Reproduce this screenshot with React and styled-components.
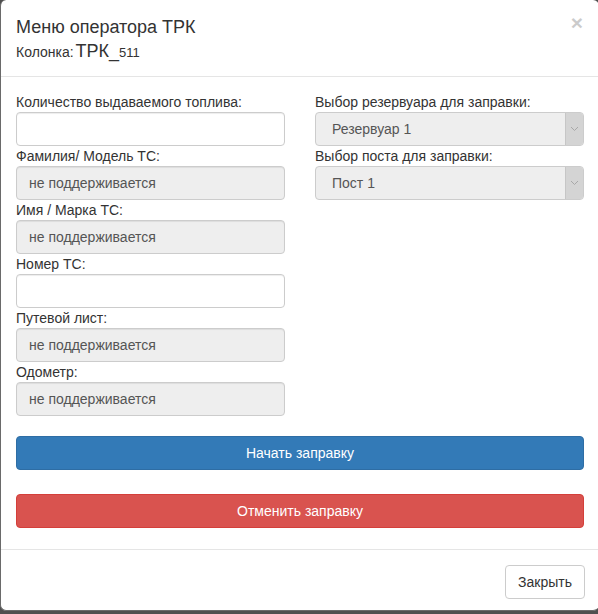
import styled, { createGlobalStyle } from "styled-components";

const Global = createGlobalStyle`
  html, body {
    margin: 0;
    padding: 0;
    background: #4f4f4f;
    font-family: "Liberation Sans", Arial, sans-serif;
    font-size: 14px;
    color: #333;
  }
  * { box-sizing: border-box; }
`;

const Modal = styled.div`
  width: 599px;
  background: #fff;
  border-radius: 6px;
  border-left: 1px solid #6a6a6a;
  border-bottom: 1px solid #6a6a6a;
`;

const Header = styled.div`
  position: relative;
  padding: 15px 15px 13px;
  border-bottom: 1px solid #e5e5e5;
`;

const Title = styled.h4`
  margin: 0;
  font-size: 18px;
  font-weight: 400;
  line-height: 1.42857;
`;

const Sub = styled.div`
  font-size: 14px;
  line-height: 20px;
`;

const Big = styled.span`
  margin-left: 2px;
  font-size: 18px;
`;

const Small = styled.span`
  font-size: 13px;
`;

const Close = styled.button`
  position: absolute;
  top: 12px;
  right: 16px;
  border: none;
  background: none;
  padding: 0;
  font-family: "Liberation Sans", Arial, sans-serif;
  font-size: 21px;
  font-weight: 700;
  line-height: 1;
  color: #000;
  opacity: 0.2;
`;

const Body = styled.div`
  padding: 15px 15px 21px;
`;

const Columns = styled.div`
  display: grid;
  grid-template-columns: 269px 269px;
  column-gap: 30px;
  align-items: start;
`;

const Col = styled.div`
  display: flex;
  flex-direction: column;
`;

const Label = styled.label`
  display: block;
  line-height: 20px;
  height: 20px;
`;

const Input = styled.input`
  display: block;
  width: 100%;
  height: 34px;
  padding: 6px 12px;
  font-family: "Liberation Sans", Arial, sans-serif;
  font-size: 14px;
  color: #555;
  background: ${(p) => (p.disabled ? "#eee" : "#fff")};
  border: 1px solid #ccc;
  border-radius: 4px;
  box-shadow: inset 0 1px 1px rgba(0, 0, 0, 0.075);
  outline: none;
  &::placeholder { color: #555; opacity: 1; }
`;

const Select = styled.div`
  display: flex;
  height: 34px;
  border: 1px solid #ccc;
  border-radius: 4px;
  background: #eee;
  color: #555;
  overflow: hidden;
`;

const SelectText = styled.div`
  flex: 1;
  padding: 0 16px;
  line-height: 32px;
`;

const Arrow = styled.div`
  width: 18px;
  background: #d4d4d4;
  border-left: 1px solid #c6c6c6;
  display: flex;
  align-items: center;
  justify-content: center;
`;

const Actions = styled.div`
  display: flex;
  flex-direction: column;
  gap: 24px;
  margin-top: 20px;
`;

const Btn = styled.button`
  display: block;
  width: ${(p) => (p.$block ? "100%" : "auto")};
  height: 34px;
  padding: 6px 12px;
  font-family: "Liberation Sans", Arial, sans-serif;
  font-size: 14px;
  line-height: 20px;
  border-radius: 4px;
  border: 1px solid ${(p) => p.$border};
  background: ${(p) => p.$bg};
  color: ${(p) => p.$color};
`;

const Footer = styled.div`
  display: flex;
  justify-content: flex-end;
  padding: 15px 14px 11px 15px;
  border-top: 1px solid #e5e5e5;
`;

function Chevron() {
  return (
    <svg width="9" height="6" viewBox="0 0 9 6">
      <path d="M1 1 L4.5 4.5 L8 1" fill="none" stroke="#a8a8a8" strokeWidth="1" />
    </svg>
  );
}

const leftFields = [
  { label: "Количество выдаваемого топлива:", disabled: false },
  { label: "Фамилия/ Модель ТС:", disabled: true },
  { label: "Имя / Марка ТС:", disabled: true },
  { label: "Номер ТС:", disabled: false },
  { label: "Путевой лист:", disabled: true },
  { label: "Одометр:", disabled: true },
];

const rightFields = [
  { label: "Выбор резервуара для заправки:", value: "Резервуар 1" },
  { label: "Выбор поста для заправки:", value: "Пост 1" },
];

export default function App() {
  return (
    <>
      <Global />
      <Modal>
        <Header>
          <Title>Меню оператора ТРК</Title>
          <Sub>
            Колонка:<Big>ТРК_</Big>
            <Small>511</Small>
          </Sub>
          <Close>×</Close>
        </Header>
        <Body>
          <Columns>
            <Col>
              {leftFields.map((f) => (
                <div key={f.label}>
                  <Label>{f.label}</Label>
                  {f.disabled ? (
                    <Input disabled placeholder="не поддерживается" />
                  ) : (
                    <Input />
                  )}
                </div>
              ))}
            </Col>
            <Col>
              {rightFields.map((f) => (
                <div key={f.label}>
                  <Label>{f.label}</Label>
                  <Select>
                    <SelectText>{f.value}</SelectText>
                    <Arrow>
                      <Chevron />
                    </Arrow>
                  </Select>
                </div>
              ))}
            </Col>
          </Columns>
          <Actions>
            <Btn $block $bg="#337ab7" $border="#2e6da4" $color="#fff">
              Начать заправку
            </Btn>
            <Btn $block $bg="#d9534f" $border="#d43f3a" $color="#fff">
              Отменить заправку
            </Btn>
          </Actions>
        </Body>
        <Footer>
          <Btn $bg="#fff" $border="#ccc" $color="#333">
            Закрыть
          </Btn>
        </Footer>
      </Modal>
    </>
  );
}
